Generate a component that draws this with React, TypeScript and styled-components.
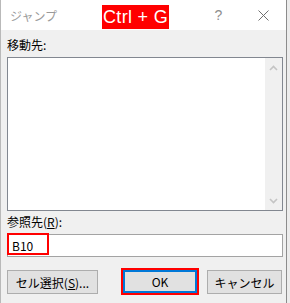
import styled, { createGlobalStyle } from 'styled-components';

const GlobalStyle = createGlobalStyle`
	html, body {
		margin: 0;
		padding: 0;
		background: #ececec;
	}
	body {
		font-family: "Noto Sans CJK JP", "Noto Sans", sans-serif;
	}
`;

const Stage = styled.div`
	width: 290px;
	height: 303px;
	display: flex;
	background: #ececec;
	overflow: hidden;
`;

const Dialog = styled.div`
	width: 287px;
	height: 303px;
	box-sizing: border-box;
	border-left: 1px solid #b9b9b9;
	border-right: 1px solid #8c8c8c;
	background: #f0f0f0;
	display: flex;
	flex-direction: column;
`;

const TitleBar = styled.div`
	position: relative;
	height: 30px;
	flex-shrink: 0;
	background: #fff;
	display: flex;
	align-items: center;
`;

const Title = styled.span`
	padding-left: 9px;
	font-size: 12px;
	color: #9a9a9a;
`;

const Shortcut = styled.div`
	position: absolute;
	left: 101px;
	top: 5px;
	width: 67px;
	height: 24px;
	background: #ff0000;
	color: #fff;
	font-family: "Liberation Sans", Arial, sans-serif;
	font-size: 18px;
	letter-spacing: 0.3px;
	display: flex;
	align-items: center;
	justify-content: center;
`;

const Controls = styled.div`
	margin-left: auto;
	display: flex;
	height: 100%;
`;

const ControlButton = styled.div`
	width: 45px;
	display: flex;
	align-items: center;
	justify-content: center;
	color: #8e8e8e;
	font-family: "Liberation Sans", Arial, sans-serif;
	font-size: 14px;
`;

const Body = styled.div`
	flex: 1;
	display: flex;
	flex-direction: column;
	padding: 7px 3px 0 6px;
`;

const Label = styled.div<{ $gap: number }>`
	margin-top: ${(p) => p.$gap}px;
	font-size: 12px;
	line-height: 16px;
	height: 16px;
	color: #000;
`;

const ListBox = styled.div`
	margin-top: 4px;
	height: 154px;
	box-sizing: border-box;
	border: 1px solid #828790;
	background: #fff;
	display: flex;
	justify-content: flex-end;
`;

const ScrollBar = styled.div`
	width: 17px;
	background: #f0f0f0;
	display: flex;
	flex-direction: column;
	justify-content: space-between;
	align-items: center;
	padding: 7px 0 6px;
`;

const InputWrap = styled.div`
	position: relative;
	margin-top: 4px;
	height: 23px;
	box-sizing: border-box;
	border: 1px solid #a3a3a3;
	background: #fff;
	display: flex;
	align-items: center;
	padding-left: 4px;
	font-size: 12px;
`;

const Mark = styled.div`
	position: absolute;
	left: -1px;
	top: -2px;
	width: 42px;
	height: 22px;
	box-sizing: border-box;
	border: 2px solid #ff0000;
`;

const ButtonRow = styled.div`
	margin-top: 13px;
	display: flex;
	align-items: flex-start;
	padding-right: 1px;
`;

const Button = styled.div<{ $w: number; $primary?: boolean }>`
	width: ${(p) => p.$w}px;
	height: ${(p) => (p.$primary ? 23 : 24)}px;
	box-sizing: border-box;
	border: ${(p) => (p.$primary ? '2px solid #0078d7' : '1px solid #adadad')};
	background: #e1e1e1;
	outline: ${(p) => (p.$primary ? '2px solid #ff0000' : 'none')};
	display: flex;
	align-items: center;
	justify-content: center;
	font-size: 12px;
	color: #000;
	&.ok {
		margin-left: auto;
		margin-right: 10px;
	}
`;

const Chevron = ({ up }: { up?: boolean }) => (
	<svg width="9" height="6" viewBox="0 0 9 6">
		<polyline
			points={up ? '1,5 4.5,1.5 8,5' : '1,1 4.5,4.5 8,1'}
			fill="none"
			stroke="#c4c4c4"
			strokeWidth="1.6"
		/>
	</svg>
);

export default function App() {
	return (
		<>
			<GlobalStyle />
			<Stage>
				<Dialog>
					<TitleBar>
						<Title>ジャンプ</Title>
						<Shortcut>Ctrl + G</Shortcut>
						<Controls>
							<ControlButton>?</ControlButton>
							<ControlButton>
								<svg width="11" height="11" viewBox="0 0 11 11">
									<path d="M0.5 0.5 L10.5 10.5 M10.5 0.5 L0.5 10.5" stroke="#707070" strokeWidth="1" />
								</svg>
							</ControlButton>
						</Controls>
					</TitleBar>
					<Body>
						<Label $gap={0}>移動先:</Label>
						<ListBox>
							<ScrollBar>
								<Chevron up />
								<Chevron />
							</ScrollBar>
						</ListBox>
						<Label $gap={3}>
							参照先(<u>R</u>):
						</Label>
						<InputWrap>
							B10
							<Mark />
						</InputWrap>
						<ButtonRow>
							<Button $w={91}>
								セル選択(<u>S</u>)...
							</Button>
							<Button className="ok" $w={74} $primary>
								OK
							</Button>
							<Button $w={75}>キャンセル</Button>
						</ButtonRow>
					</Body>
				</Dialog>
			</Stage>
		</>
	);
}
